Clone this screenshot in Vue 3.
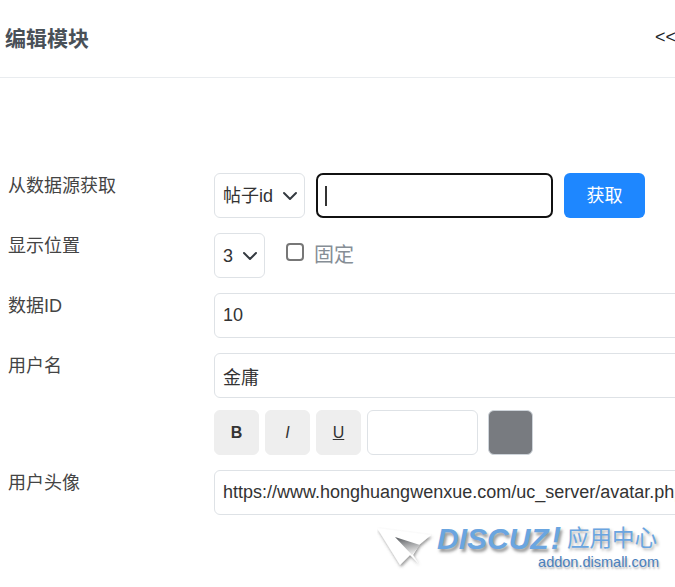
<script setup>
const rows = [
  { label: '数据ID', value: '10' },
  { label: '用户名', value: '金庸' },
]
</script>

<template>
  <div class="page">
    <header class="head">
      <h1 class="title">编辑模块</h1>
      <span class="back">&lt;&lt;</span>
    </header>
    <form class="form" @submit.prevent>
      <div class="row">
        <label class="label">从数据源获取</label>
        <div class="controls">
          <select class="field select source"><option>帖子id</option></select>
          <div class="focus-box">
            <input class="focused" type="text" />
            <span class="caret"></span>
          </div>
          <button class="fetch" type="button">获取</button>
        </div>
      </div>
      <div class="row">
        <label class="label">显示位置</label>
        <div class="controls">
          <select class="field select pos"><option>3</option></select>
          <label class="check"><input type="checkbox" class="box" /><span class="check-text">固定</span></label>
        </div>
      </div>
      <div v-for="r in rows" :key="r.label" class="row">
        <label class="label">{{ r.label }}</label>
        <div class="controls"><input class="field wide" type="text" :value="r.value" /></div>
      </div>
      <div class="row tool-row">
        <span class="label"></span>
        <div class="controls tools">
          <button class="tool bold" type="button">B</button>
          <button class="tool italic" type="button">I</button>
          <button class="tool under" type="button">U</button>
          <input class="field size" type="text" />
          <span class="swatch"></span>
        </div>
      </div>
      <div class="row">
        <label class="label">用户头像</label>
        <div class="controls">
          <input class="field wide" type="text" value="https://www.honghuangwenxue.com/uc_server/avatar.php?uid=1" />
        </div>
      </div>
    </form>
    <div class="mark">
      <svg class="plane" width="60" height="50" viewBox="0 0 60 50">
        <defs>
          <filter id="ps" x="-20%" y="-20%" width="140%" height="150%">
            <feDropShadow dx="1" dy="2" stdDeviation="1.5" flood-color="#555" flood-opacity=".6" />
          </filter>
          <linearGradient id="wedge" x1="0" y1="0" x2="0.3" y2="1">
            <stop offset="0" stop-color="#55585c" />
            <stop offset="1" stop-color="#e6e6e6" />
          </linearGradient>
        </defs>
        <path d="M0 3 L54 10 L42 20 L36 30 L41 38 L33 30 L23 40 Z" fill="#fff" filter="url(#ps)" />
        <path d="M18 12 L43 20 L35 30 Z" fill="url(#wedge)" />
      </svg>
      <div class="mark-text">
        <div class="mark-top"><span class="dz">DISCUZ</span><span class="bang">!</span><span class="cn">应用中心</span></div>
        <div class="url">addon.dismall.com</div>
      </div>
    </div>
  </div>
</template>

<style>
html, body { margin: 0; overflow: hidden; background: #fff; }
</style>

<style scoped>
.page {
  position: relative;
  width: 675px;
  height: 587px;
  overflow: hidden;
  font-family: "Liberation Sans", "Noto Sans CJK SC", sans-serif;
  font-size: 18px;
  color: #333;
}
.head {
  display: flex;
  justify-content: space-between;
  align-items: center;
  box-sizing: border-box;
  height: 78px;
  padding: 0 0 3px 5px;
  border-bottom: 1px solid #e9ecef;
  white-space: nowrap;
}
.title { margin: 0; font-size: 21px; font-weight: 700; color: #495057; }
.back { width: 20px; overflow: hidden; color: #212529; font-size: 18px; }
.form { display: flex; flex-direction: column; gap: 15px; padding: 95px 0 0 8px; }
.row { display: flex; }
.tool-row { margin-top: -3px; }
.label { flex: 0 0 206px; line-height: 26px; color: #444; }
.controls { display: flex; align-items: center; }
.field {
  box-sizing: border-box;
  height: 45px;
  padding: 0 8px;
  border: 1px solid #dee2e6;
  border-radius: 6px;
  background-color: #fff;
  color: #333;
  font: inherit;
  outline: none;
}
.select {
  appearance: none;
  background-image: url("data:image/svg+xml,%3csvg xmlns='http://www.w3.org/2000/svg' viewBox='0 0 16 16'%3e%3cpath fill='none' stroke='%23343a40' stroke-linecap='round' stroke-linejoin='round' stroke-width='2' d='m2 5 6 6 6-6'/%3e%3c/svg%3e");
  background-repeat: no-repeat;
  background-position: right 6px center;
  background-size: 16px 16px;
}
.source { width: 91px; }
.pos { width: 51px; }
.focus-box { position: relative; margin-left: 11px; }
.focused {
  display: block;
  box-sizing: border-box;
  width: 237px;
  height: 45px;
  padding: 0 8px;
  border: 2px solid #111;
  border-radius: 7px;
  background: #fff;
  outline: none;
  font: inherit;
}
.caret { position: absolute; left: 9px; top: 13px; width: 2px; height: 20px; background: #333; }
.fetch {
  width: 81px;
  height: 45px;
  margin-left: 11px;
  padding: 0 0 4px;
  border: 0;
  border-radius: 6px;
  background: #1e87ff;
  color: #fff;
  font: inherit;
}
.check { display: flex; align-items: center; margin-left: 21px; color: #868e96; font-size: 20px; }
.check-text { margin-bottom: 4px; }
.box {
  appearance: none;
  box-sizing: border-box;
  width: 18px;
  height: 18px;
  margin: 0 10px 8px 0;
  border: 2px solid #777;
  border-radius: 4px;
  background: #fff;
}
.wide { width: 620px; }
.tools { gap: 6px; }
.tool {
  box-sizing: border-box;
  width: 45px;
  height: 45px;
  padding: 0;
  border: 1px solid #eee;
  border-radius: 6px;
  background: #eee;
  color: #333;
  font: inherit;
  font-size: 16px;
}
.bold { font-weight: 700; }
.italic { font-style: italic; }
.under { text-decoration: underline; }
.size { width: 111px; }
.swatch {
  box-sizing: border-box;
  width: 45px;
  height: 45px;
  margin-left: 4px;
  border: 1px solid #ced4da;
  border-radius: 6px;
  background: #787b80;
}
.mark {
  position: absolute;
  left: 377px;
  top: 521px;
  display: flex;
  white-space: nowrap;
}
.plane { margin-top: 4px; }
.mark-top { display: flex; align-items: baseline; height: 33px; }
.dz {
  font-size: 30px;
  font-weight: 700;
  font-style: italic;
  color: #6aa5e0;
  text-shadow: 2px 3px 3px rgba(70, 70, 70, .55);
}
.bang {
  font-size: 31px;
  font-weight: 700;
  font-style: italic;
  color: #6aa5e0;
  margin: 0 6px 0 2px;
  text-shadow: 2px 3px 3px rgba(70, 70, 70, .55);
}
.cn {
  font-size: 22.5px;
  color: #6aa5e0;
  position: relative;
  top: -3px;
  text-shadow: 2px 2px 3px rgba(70, 70, 70, .45);
}
.url {
  text-align: right;
  margin-right: -2px;
  font-size: 14.5px;
  line-height: 17px;
  color: #4a80bd;
  text-shadow: 1px 2px 2px rgba(70, 70, 70, .4);
}
</style>
